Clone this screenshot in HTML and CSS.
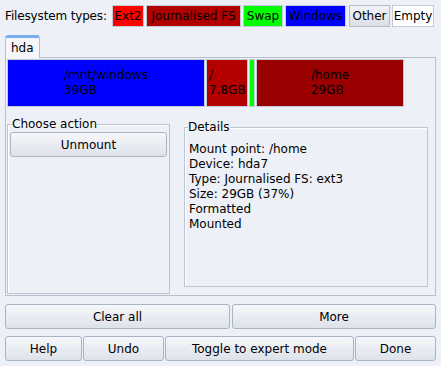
FILE: index.html
```html
<!DOCTYPE html>
<html lang="en">
    <head>
        <meta charset="UTF-8">
        <title>Partitioning</title>
        <link rel="stylesheet" href="styles.css">
    </head>
    <body>
        <div class="fs-types">
            <span class="fs-label">Filesystem types:</span>
            <span class="fs-item ext2">Ext2</span>
            <span class="fs-item journal">Journalised FS</span>
            <span class="fs-item swap">Swap</span>
            <span class="fs-item windows">Windows</span>
            <span class="fs-item other">Other</span>
            <span class="fs-item empty">Empty</span>
        </div>
        <div class="tabs">
            <div class="tab">hda</div>
        </div>
        <div class="pane">
            <div class="disk-bar">
                <div class="part windows" style="width: 198px"><div class="part-text">/mnt/windows<br>39GB</div></div>
                <div class="part root" style="width: 42px"><div class="part-text">/<br>7.8GB</div></div>
                <div class="part swap" style="width: 6px"></div>
                <div class="part home" style="width: 148px"><div class="part-text">/home<br>29GB</div></div>
            </div>
            <div class="frames">
                <fieldset class="frame actions">
                    <legend>Choose action</legend>
                    <button class="btn">Unmount</button>
                </fieldset>
                <fieldset class="frame details">
                    <legend>Details</legend>
                    <div class="details-text">
                        Mount point: /home<br>
                        Device: hda7<br>
                        Type: Journalised FS: ext3<br>
                        Size: 29GB (37%)<br>
                        Formatted<br>
                        Mounted
                    </div>
                </fieldset>
            </div>
        </div>
        <div class="row-one">
            <button class="btn">Clear all</button>
            <button class="btn">More</button>
        </div>
        <div class="row-two">
            <button class="btn">Help</button>
            <button class="btn">Undo</button>
            <button class="btn">Toggle to expert mode</button>
            <button class="btn">Done</button>
        </div>
    </body>
</html>
```

FILE: styles.css
```css
* {
    box-sizing: border-box;
}
body {
    margin: 0;
    padding: 5px;
    background: #edf0f6;
    font-family: "DejaVu Sans", sans-serif;
    font-size: 12px;
    color: #000;
}
.fs-types {
    display: flex;
    align-items: center;
    gap: 2px;
    height: 22px;
    white-space: nowrap;
}
.fs-label {
    width: 105px;
    flex-shrink: 0;
    letter-spacing: -0.15px;
}
.fs-item {
    flex-shrink: 0;
    height: 22px;
    line-height: 20px;
    text-align: center;
    overflow: hidden;
    border: 1px solid #c3cbd8;
}
.fs-item.ext2 { width: 32px; }
.fs-item.journal { width: 95px; }
.fs-item.swap { width: 40px; }
.fs-item.windows { width: 61px; margin-right: 1px; }
.fs-item.other { width: 41px; }
.fs-item.empty { width: 42px; }
.ext2 { background: #ff0000; }
.journal { background: #b00000; }
.swap { background: #00ff00; }
.windows { background: #0000ff; }
.other {
    background: linear-gradient(#f2f4f8, #d9dee7);
    border-color: #b4bdcb;
}
.empty { background: #fff; }
.tabs {
    display: flex;
    margin-top: 8px;
}
.tab {
    height: 23px;
    margin-bottom: -1px;
    padding: 3px 5px 0 5px;
    background: #f4f6fa;
    border: 1px solid #b6c0ce;
    border-top: 3px solid #78aef0;
    border-bottom: none;
    border-radius: 3px 3px 0 0;
    position: relative;
}
.pane {
    height: 239px;
    border: 1px solid #b6c0ce;
    padding: 1px;
    display: flex;
    flex-direction: column;
}
.disk-bar {
    display: flex;
    gap: 1px;
    height: 49px;
}
.part {
    display: flex;
    overflow: hidden;
    border: 1px solid #c3cbd8;
}
.part.root { background: #b40000; }
.part.home { background: #9a0000; }
.part-text {
    margin: auto;
    line-height: 15px;
    white-space: nowrap;
    text-align: left;
}
.part.root .part-text {
    margin-left: 2px;
}
.frames {
    display: flex;
    margin-top: 10px;
}
.frame {
    margin: 0;
    border: 1px solid #bcc5d2;
    box-shadow: inset 1px 1px 0 #fff;
    min-width: 0;
}
.frame legend {
    padding: 0;
    margin-left: 2px;
    line-height: 14px;
}
.actions {
    width: 163px;
    height: 177px;
    padding: 1px 2px;
}
.actions .btn {
    width: 100%;
    height: 25px;
}
.details {
    flex: 1;
    height: 167px;
    margin: 3px 6px 0 14px;
    padding: 8px 4px 8px 3px;
}
.details legend {
    margin-left: 0;
}
.details-text {
    padding-left: 1px;
    line-height: 15px;
}
.btn {
    font-family: "DejaVu Sans", sans-serif;
    font-size: 12px;
    color: #000;
    background: linear-gradient(#f6f7fa, #dde2ea);
    border: 1px solid #a9b4c4;
    border-radius: 3px;
    padding: 0;
}
.row-one {
    display: grid;
    grid-template-columns: 225px 1fr;
    gap: 2px;
    margin-top: 8px;
    height: 25px;
}
.row-two {
    display: grid;
    grid-template-columns: 77px 81px 189px 1fr;
    gap: 1px;
    margin-top: 7px;
    height: 25px;
}
```
